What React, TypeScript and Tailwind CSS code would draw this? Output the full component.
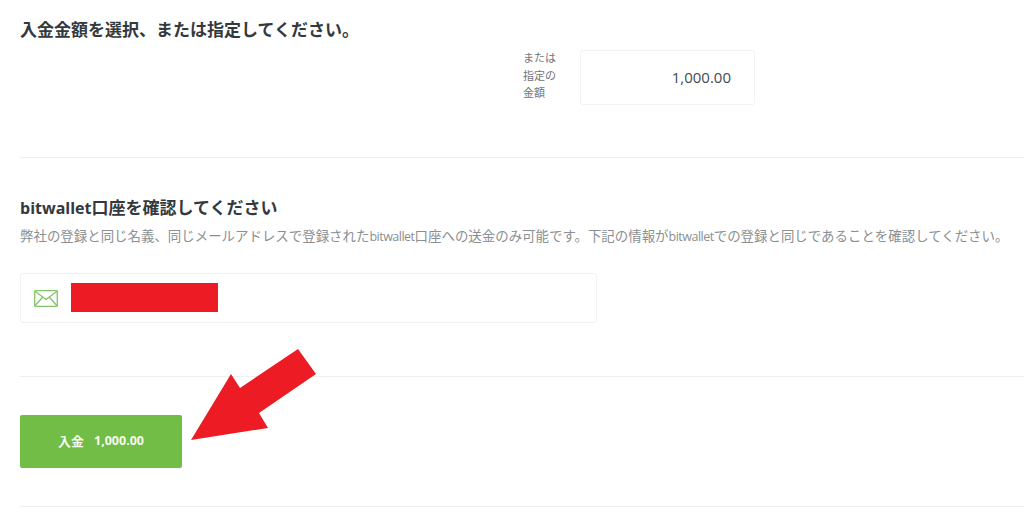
const font = "font-['Open_Sans','Noto_Sans_CJK_JP',sans-serif]";

function Envelope() {
  return (
    <svg width="24" height="17" viewBox="0 0 24 17" fill="none" stroke="#84c46a" strokeWidth="1.3" strokeLinejoin="round" strokeLinecap="round">
      <rect x="0.7" y="0.7" width="22.6" height="15.6" rx="1" />
      <path d="M1 1.2 L12 9.6 L23 1.2" />
      <path d="M1 15.8 L8.6 7.2" />
      <path d="M23 15.8 L15.4 7.2" />
    </svg>
  );
}

function Arrow() {
  return (
    <svg className="absolute left-[185px] top-[345px]" width="135" height="100" viewBox="185 345 135 100">
      <polygon fill="#ed1c24" points="191,440 231,374 240,388 298,349 316,374 259,413 268,428" />
    </svg>
  );
}

function Latin({ children }: { children: string }) {
  return <span className="text-[12.5px] tracking-[-0.5px]">{children}</span>;
}

export default function App() {
  return (
    <div className={`relative h-[521px] w-[1024px] overflow-hidden bg-white pl-5 text-[#333a40] ${font}`}>
      <section className="h-[158px] border-b border-[#efefef] pt-[18px]">
        <h2 className="text-[17px] font-bold leading-[23px] text-[#33393d]">入金金額を選択、または指定してください。</h2>
        <div className="mt-[9px] flex h-[55px] items-center pl-[503px]">
          <div className="mb-[4px] w-[40px] text-[11px] leading-[17.5px] text-[#70767a]">または<br />指定の<br />金額</div>
          <div className="ml-[17px] flex h-[55px] w-[175px] items-center justify-end rounded-[3px] border border-[#f3f3f3] pr-[23px] text-[15px] text-[#444b50]">1,000.00</div>
        </div>
      </section>

      <section className="h-[219px] border-b border-[#efefef] pt-[39px]">
        <h2 className="text-[17px] font-bold leading-[22px] text-[#33393d]"><span className="text-[16px]">bitwallet</span>口座を確認してください</h2>
        <p className="mt-[8px] whitespace-nowrap text-[13.45px] leading-[18px] text-[#8a8f92]">弊社の登録と同じ名義、同じメールアドレスで登録された<Latin>bitwallet</Latin>口座への送金のみ可能です。下記の情報が<Latin>bitwallet</Latin>での登録と同じであることを確認してください。</p>
        <div className="mt-[27px] flex h-[50px] w-[577px] items-center rounded-[3px] border border-[#f3f3f3] pl-[13px]">
          <Envelope />
          <div className="mb-[2px] ml-[13px] h-[29px] w-[147px] bg-[#ed1c24]" />
        </div>
      </section>

      <section className="h-[130px] border-b border-[#efefef] pt-[38px]">
        <button className="flex h-[53px] w-[162px] items-center justify-center gap-[10px] rounded-[2px] bg-[#72bd45] text-[13px] font-bold text-[#f4faf0]">
          <span>入金</span>
          <span className="text-[12.5px]">1,000.00</span>
        </button>
      </section>

      <Arrow />
    </div>
  );
}
